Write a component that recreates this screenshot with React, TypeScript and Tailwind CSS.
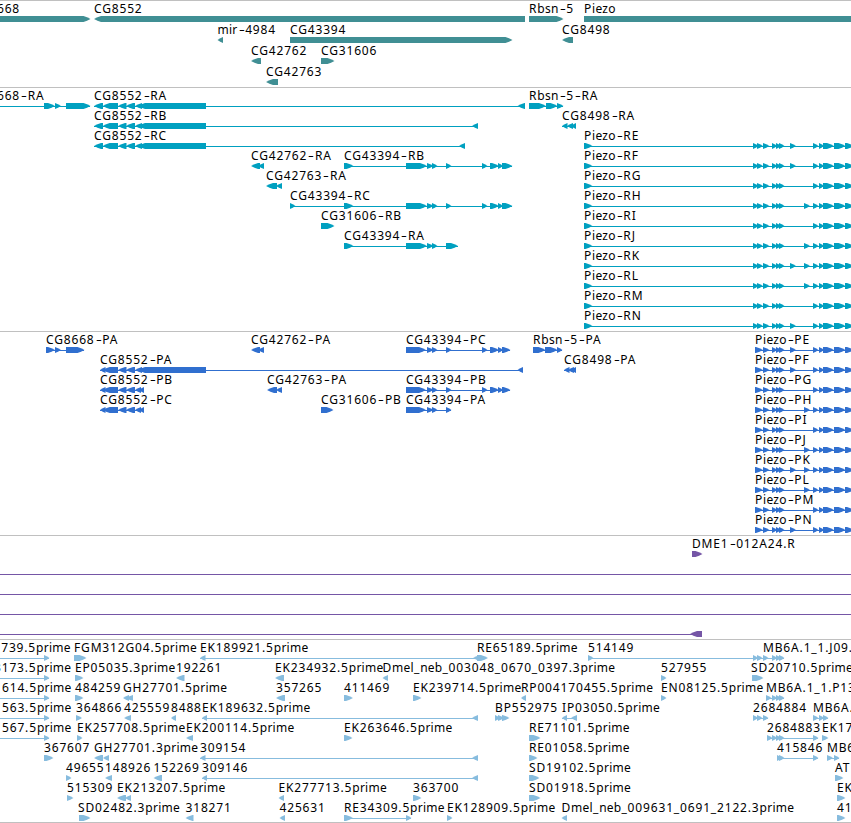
type Span = [number, number];

type Feature = {
  name?: string;
  // label position, defaults to the start of the feature
  at?: number;
  dir?: 'fwd' | 'rev' | 'none';
  blocks?: Span[];
  line?: Span;
};

type TrackProps = {
  rows: Feature[][];
  rowClass?: string;
  className: string;
};

const HEAD = 7;

function blockPoints([start, end]: Span, dir: Feature['dir']) {
  const head = Math.min(HEAD, end - start);
  if (dir === 'none') {
    return `${start},0 ${end},0 ${end},6 ${start},6`;
  }
  // the head bulges a little so short exons stay readable
  const bulge = head * 0.5;
  if (dir === 'rev') {
    return `${end},0 ${start + head},0 ${start + bulge},1.2 ${start},3 ${start + bulge},4.8 ${start + head},6 ${end},6`;
  }
  return `${start},0 ${end - head},0 ${end - bulge},1.2 ${end},3 ${end - bulge},4.8 ${end - head},6 ${start},6`;
}

const fwd = (name: string, blocks: Span[], line?: Span, at?: number): Feature => ({ name, blocks, line, at, dir: 'fwd' });
const rev = (name: string, blocks: Span[], line?: Span, at?: number): Feature => ({ name, blocks, line, at, dir: 'rev' });

const genes: Feature[][] = [
  [
    fwd('CG8668', [[-30, 90.5]], undefined, -28.5),
    rev('CG8552', [[94, 525]]),
    fwd('Rbsn-5', [[529, 563.5]]),
    { name: 'Piezo', blocks: [[584, 860]], dir: 'none' },
  ],
  [rev('mir-4984', [[217.5, 223]]), fwd('CG43394', [[290, 512.5]]), rev('CG8498', [[562, 573]])],
  [rev('CG42762', [[251, 261]]), fwd('CG31606', [[321, 334.5]])],
  [rev('CG42763', [[266, 278]])],
];

const cg8552: Span[] = [[102.7, 118], [118, 126.5], [126, 135]];
const cg43394: Span[] = [[427, 433.5], [432, 437.5]];
const cg43394End: Span[] = [[446, 451.5], [482, 487.5], [490, 499], [498, 503]];

// optional exons that differ between the Piezo isoforms
const exonA: Span = [790, 796];
const exonB: Span = [804, 810];

const isoforms: [string, Span[]][] = [
  ['E', [exonA]],
  ['F', [exonA]],
  ['G', []],
  ['H', [exonB]],
  ['I', []],
  ['J', [exonB]],
  ['K', [exonA, exonB]],
  ['L', [exonB]],
  ['M', []],
  ['N', [exonA]],
];

function piezo(index: number, kind: 'R' | 'P'): Feature {
  const [letter, extra] = isoforms[index];
  const first: Span[] = kind === 'R' ? [[584, 592.5], [753, 758.5], [757, 763]] : [[755, 763]];
  return fwd(
    `Piezo-${kind}${letter}`,
    [
      ...first,
      [763, 769.5],
      [772, 777],
      [776, 781],
      [779, 784.5],
      ...extra,
      [813, 818.5],
      [819, 824],
      [823, 834],
      [834, 845.5],
      [845, 854],
    ],
    [first[0][0], 851],
  );
}

const transcripts: Feature[][] = [
  [
    fwd('CG8668-RA', [[44, 55], [55, 61], [66, 90.5]], [0, 90], -28.5),
    rev('CG8552-RA', [[94, 103], ...cg8552, [135, 142], [138, 206], [517.5, 525]], [94, 525]),
    fwd('Rbsn-5-RA', [[529, 546], [546, 557.5], [557, 563.5]], [529, 563]),
  ],
  [
    rev('CG8552-RB', [[94, 103], ...cg8552, [135, 142], [138, 206], [472, 478]], [94, 478]),
    rev('CG8498-RA', [[562, 567.5], [567, 573], [571, 576]], [562, 576]),
  ],
  [
    rev('CG8552-RC', [[94, 103], ...cg8552, [135, 142], [138, 206], [459, 465]], [94, 465]),
    piezo(0, 'R'),
  ],
  [
    rev('CG42762-RA', [[251, 260], [258, 264]]),
    fwd('CG43394-RB', [[344, 353.5], [406, 427], ...cg43394, ...cg43394End, [502, 512.5]], [344, 512]),
    piezo(1, 'R'),
  ],
  [rev('CG42763-RA', [[266, 277], [276, 282]]), piezo(2, 'R')],
  [
    fwd('CG43394-RC', [[290, 295.5], [344, 353.5], [406, 427], ...cg43394, ...cg43394End, [502, 512.5]], [290, 512]),
    piezo(3, 'R'),
  ],
  [fwd('CG31606-RB', [[321, 334.5]]), piezo(4, 'R')],
  [fwd('CG43394-RA', [[344, 353.5], [406, 427], ...cg43394, [446, 458]], [344, 458]), piezo(5, 'R')],
  [piezo(6, 'R')],
  [piezo(7, 'R')],
  [piezo(8, 'R')],
  [piezo(9, 'R')],
];

const proteins: Feature[][] = [
  [
    fwd('CG8668-PA', [[46, 55], [55, 61], [66, 84.5]], [46, 84]),
    rev('CG42762-PA', [[251, 260], [258, 264]]),
    fwd('CG43394-PC', [[406, 426], ...cg43394, ...cg43394End, [502, 510.5]], [406, 510]),
    fwd('Rbsn-5-PA', [[533, 545.5], [545, 557.5], [557, 562.5]], [533, 562]),
    piezo(0, 'P'),
  ],
  [
    rev('CG8552-PA', [[100, 105.5], ...cg8552, [135, 142], [138, 206], [517.5, 523]], [100, 523]),
    rev('CG8498-PA', [[564, 569.5], [568, 574], [571, 576]], [564, 576]),
    piezo(1, 'P'),
  ],
  [
    rev('CG8552-PB', [[100, 105.5], ...cg8552, [135, 141], [139, 144]], [100, 144]),
    rev('CG42763-PA', [[267, 277], [276, 282]]),
    fwd('CG43394-PB', [[406, 426], ...cg43394, ...cg43394End, [502, 510.5]], [406, 510]),
    piezo(2, 'P'),
  ],
  [
    rev('CG8552-PC', [[100, 105.5], ...cg8552, [135, 141], [139, 144]], [100, 144]),
    fwd('CG31606-PB', [[321, 333.5]]),
    fwd('CG43394-PA', [[406, 426], ...cg43394, [446, 451.5]], [406, 451]),
    piezo(3, 'P'),
  ],
  [piezo(4, 'P')],
  [piezo(5, 'P')],
  [piezo(6, 'P')],
  [piezo(7, 'P')],
  [piezo(8, 'P')],
  [piezo(9, 'P')],
];

const reagents: Feature[][] = [
  [fwd('DME1-012A24.R', [[692, 702.5]])],
  [{ line: [0, 851] }],
  [{ line: [0, 851] }],
  [{ line: [0, 851] }],
  [{ dir: 'rev', blocks: [[690, 702]], line: [0, 702] }],
];

const shared: Span[] = [[772, 777], [776, 781], [779, 784.5]];

const ests: Feature[][] = [
  [
    fwd('1739.5prime', [[44, 49.5]], [0, 49], -6.5),
    fwd('FGM312G04.5prime', [[74, 86.5]]),
    rev('EK189921.5prime', [[200, 205.5], [473, 480]], [200, 478]),
    fwd('RE65189.5prime', [[477, 488]]),
    fwd('514149', [[588, 593.5], [753, 758], [757, 762.5], [763, 768.5]], [588, 784]),
    fwd('MB6A.1_1.J09.', shared, undefined, 763),
  ],
  [
    fwd('3173.5prime', [[44, 49.5]], [0, 49], -6),
    fwd('EP05035.3prime', [[75, 83.5]]),
    rev('192261', [[176, 184.5]]),
    rev('EK234932.5prime', [[275, 284]]),
    rev('Dmel_neb_003048_0670_0397.3prime', [[382.5, 388]]),
    fwd('527955', [[661, 666.5]]),
    fwd('SD20710.5prime', [[752, 763.5]], undefined, 751),
  ],
  [
    fwd('614.5prime', [[44, 49.5]], [0, 49], 2),
    fwd('484259', [[75, 83.5]]),
    rev('GH27701.5prime', [[123, 129], [126, 133]]),
    rev('357265', [[276, 285]]),
    fwd('411469', [[344, 353]]),
    fwd('EK239714.5prime', [[413, 421.5]]),
    rev('RP004170455.5prime', [[521, 526]]),
    fwd('EN08125.5prime', [[661, 666.5]]),
    fwd('MB6A.1_1.P13', [[766, 771.5], ...shared], [766, 784]),
  ],
  [
    fwd('563.5prime', [[44, 49.5]], [0, 49], 2),
    fwd('364866', [[76, 82]]),
    rev('425559', [[124, 131]]),
    rev('8488', [[171, 176]]),
    rev('EK189632.5prime', [[202, 207], [472, 478]], [202, 478]),
    fwd('BP552975', [[495, 500], [498, 504], [502, 509.5]]),
    rev('IP03050.5prime', [[562, 567], [571, 577]], [562, 577]),
    fwd('2684884', [[753, 758], [757, 762.5], [763, 768.5]], [753, 768]),
    fwd('MB6A.', [[813, 818.5], [819, 824], [823, 828.5]], [813, 828]),
  ],
  [
    fwd('567.5prime', [[44, 49.5]], [0, 49], 2),
    fwd('EK257708.5prime', [[77, 82.5]]),
    rev('EK200114.5prime', [[186, 193]]),
    fwd('EK263646.5prime', [[344, 352.5]]),
    fwd('RE71101.5prime', [[529, 540.5]]),
    fwd('2684883', [[767, 772.5], ...shared, [813, 818.5]], [767, 818]),
    fwd('EK17', [[822, 828.5]]),
  ],
  [
    fwd('367607', [[44, 53.5]]),
    rev('GH27701.3prime', [[94, 103], [103, 109]]),
    rev('309154', [[200, 205.5], [472, 478]], [200, 478]),
    fwd('RE01058.5prime', [[529, 537.5]]),
    fwd('415846', [[777, 782], [779, 784.5], [813, 818.5]], [777, 818]),
    fwd('MB6', [[827, 833], [834, 839.5]], [827, 839]),
  ],
  [
    fwd('49655', [[66, 71.5]]),
    rev('148926', [[105, 112]]),
    rev('152269', [[153.5, 162]]),
    rev('309146', [[202, 207], [472, 478]], [202, 478]),
    fwd('SD19102.5prime', [[529, 539.5]]),
    fwd('AT', [[835, 843.5]]),
  ],
  [
    fwd('515309', [[67, 73.5]]),
    rev('EK213207.5prime', [[117, 126], [125, 131]]),
    rev('EK277713.5prime', [[278.5, 284]]),
    fwd('363700', [[413, 421.5]]),
    fwd('SD01918.5prime', [[529, 540.5]]),
    fwd('EK', [[837, 845.5]]),
  ],
  [
    fwd('SD02482.3prime', [[79, 90.5]], undefined, 78),
    rev('318271', [[185.5, 193.5]]),
    rev('425631', [[279.5, 285]]),
    fwd('RE34309.5prime', [[344, 353], [406, 411.5]], [344, 411]),
    fwd('EK128909.5prime', [[447, 452.5]]),
    rev('Dmel_neb_009631_0691_2122.3prime', [[561.5, 567]]),
    fwd('41', [[837, 845.5]]),
  ],
];

// hyphens are drawn wide, lowercase runs are set tighter than digits
function Label({ name, left }: { name: string; left?: number }) {
  return (
    <span className="absolute top-0 whitespace-pre text-black" style={{ left }}>
      {name.split(/(-|[a-z]+)/).map((part, i) => {
        if (part === '-') {
          return <span key={i} className="inline-block w-[7.6px] origin-center scale-x-150 text-center tracking-normal">-</span>;
        }
        if (/^[a-z]/.test(part)) return <span key={i} className="tracking-[0.25px]">{part}</span>;
        return part;
      })}
    </span>
  );
}

function Row({ features, rowClass }: { features: Feature[]; rowClass: string }) {
  return (
    <div className={`relative ${rowClass}`}>
      {features.map((feature, i) =>
        feature.name ? <Label key={i} name={feature.name} left={feature.at ?? feature.blocks?.[0][0]} /> : null,
      )}
      <svg width="851" height="6" className="absolute top-[15px] left-0 fill-current">
        {features.map((feature, i) => (
          <g key={i}>
            {feature.line && (
              <rect x={feature.line[0]} y="3" width={feature.line[1] - feature.line[0]} height="1" />
            )}
            {feature.blocks?.map((block, j) => (
              <polygon key={j} points={blockPoints(block, feature.dir)} />
            ))}
          </g>
        ))}
      </svg>
    </div>
  );
}

function Track({ rows, rowClass = 'h-5', className }: TrackProps) {
  return (
    <section className={`border-t border-[#c0c0c0] ${className}`}>
      {rows.map((features, i) => (
        <Row key={i} features={features} rowClass={rowClass} />
      ))}
    </section>
  );
}

export default function App() {
  return (
    <main className="h-[823px] w-[851px] overflow-hidden bg-white font-['Noto_Sans','DejaVu_Sans',sans-serif] text-[12px] leading-[16px] tracking-[0.84px]">
      <Track rows={genes} rowClass="h-[21px]" className="h-[87px] text-[#408f94]" />
      <Track rows={transcripts} className="h-[244px] text-[#00a0c0]" />
      <Track rows={proteins} className="h-[204px] text-[#306fcf]" />
      <Track rows={reagents} className="h-[104px] text-[#7556a6]" />
      <Track rows={ests} className="h-[184px] border-b text-[#87bcde]" />
    </main>
  );
}
